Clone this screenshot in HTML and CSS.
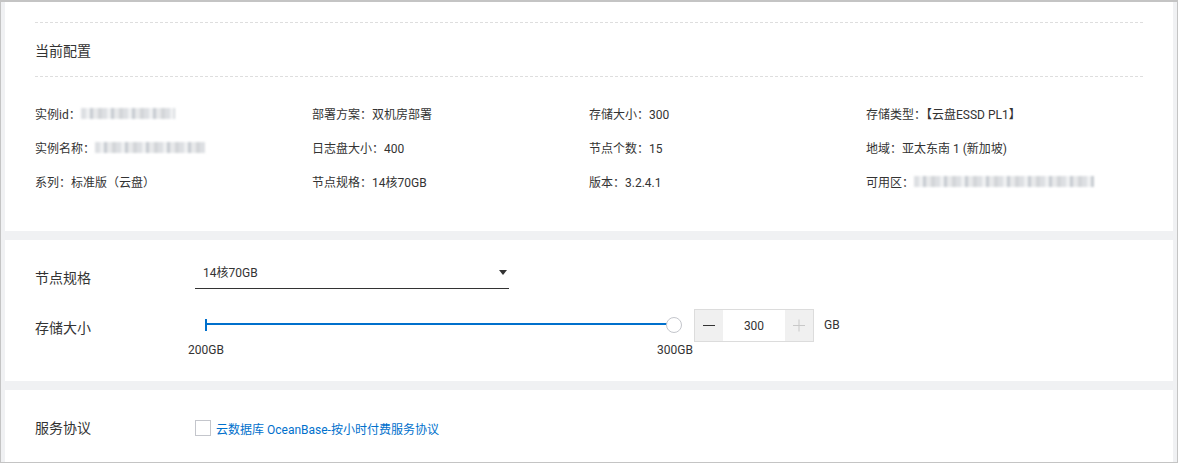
FILE: index.html
```html
<!DOCTYPE html>
<html lang="zh-CN">
<head>
    <meta charset="UTF-8">
    <title>OceanBase 变更配置</title>
    <link rel="stylesheet" href="styles.css">
</head>
<body>
    <div class="frame">
        <div class="card card-config">
            <div class="section-title">当前配置</div>
            <div class="config-grid">
                <div class="cell">实例id：<span class="blur" style="width:94px"></span></div>
                <div class="cell">部署方案：双机房部署</div>
                <div class="cell">存储大小：300</div>
                <div class="cell">存储类型：【云盘ESSD PL1】</div>

                <div class="cell">实例名称：<span class="blur" style="width:110px"></span></div>
                <div class="cell">日志盘大小：400</div>
                <div class="cell">节点个数：15</div>
                <div class="cell">地域：亚太东南 1 (新加坡)</div>

                <div class="cell">系列：标准版（云盘）</div>
                <div class="cell">节点规格：14核70GB</div>
                <div class="cell">版本：3.2.4.1</div>
                <div class="cell">可用区：<span class="blur" style="width:180px"></span></div>
            </div>
        </div>

        <div class="card card-form">
            <div class="form-row row-spec">
                <div class="form-label">节点规格</div>
                <div class="select">
                    <span>14核70GB</span>
                    <span class="caret"></span>
                </div>
            </div>
            <div class="form-row row-storage">
                <div class="form-label">存储大小</div>
                <div class="slider">
                    <div class="slider-area">
                        <div class="track">
                            <span class="tick"></span>
                            <span class="handle"></span>
                        </div>
                    </div>
                    <div class="marks">
                        <span>200GB</span>
                        <span>300GB</span>
                    </div>
                </div>
                <div class="number-input">
                    <button class="step minus" type="button"></button>
                    <input type="text" value="300">
                    <button class="step plus" type="button"></button>
                </div>
                <div class="unit">GB</div>
            </div>
        </div>

        <div class="card card-agree">
            <div class="form-row">
                <div class="form-label">服务协议</div>
                <label class="agree">
                    <span class="checkbox"></span>
                    <a href="#">云数据库 OceanBase-按小时付费服务协议</a>
                </label>
            </div>
        </div>
    </div>
</body>
</html>
```

FILE: styles.css
```css
* {
    box-sizing: border-box;
}
body {
    margin: 0;
    font-family: Roboto, "Noto Sans CJK SC", sans-serif;
    color: #333;
    font-size: 12px;
}
.frame {
    height: 463px;
    border: 1px solid #c4c4c4;
    border-top-width: 2px;
    background: #f0f1f3;
    padding: 0 4px;
    display: flex;
    flex-direction: column;
    gap: 9px;
    overflow: hidden;
}
.card {
    background: #fff;
    padding: 0 30px;
}
.card-config {
    height: 229px;
    padding-top: 20px;
}
.section-title {
    border-top: 1px dashed #dedede;
    border-bottom: 1px dashed #dedede;
    font-size: 14px;
    line-height: 20px;
    padding: 18px 0 15px;
}
.config-grid {
    display: grid;
    grid-template-columns: repeat(4, 1fr);
    grid-auto-rows: 34px;
    margin-top: 19px;
}
.cell {
    display: flex;
    align-items: center;
    white-space: nowrap;
}
.blur {
    display: inline-block;
    height: 11px;
    background: repeating-linear-gradient(90deg, #d5d8dc 0 5px, #eceef0 5px 9px, #b9bfc6 9px 12px, #e2e4e6 12px 17px, #c9ccd0 17px 21px);
    filter: blur(1.2px);
    opacity: 0.8;
}

.card-form {
    height: 141px;
    padding-top: 16px;
}
.form-row {
    display: flex;
    align-items: flex-start;
}
.form-label {
    width: 160px;
    flex-shrink: 0;
    font-size: 14px;
    line-height: 20px;
}
.row-spec .form-label {
    padding-top: 12px;
}
.select {
    width: 314px;
    height: 33px;
    border-bottom: 1px solid #333;
    padding: 7px 2px 0 8px;
    line-height: 20px;
    display: flex;
    justify-content: space-between;
}
.caret {
    margin-top: 7px;
    border-left: 4px solid transparent;
    border-right: 4px solid transparent;
    border-top: 5px solid #333;
    height: 0;
}
.row-storage {
    margin-top: 20px;
}
.row-storage .form-label {
    padding-top: 9px;
}
.slider {
    width: 499px;
    padding: 0 20px 0 11px;
}
.slider-area {
    height: 33px;
    padding-top: 14px;
}
.track {
    position: relative;
    height: 2px;
    background: #0070cc;
}
.tick {
    position: absolute;
    left: -1px;
    top: -4px;
    width: 2px;
    height: 12px;
    background: #0070cc;
}
.handle {
    position: absolute;
    right: -8px;
    top: -6px;
    width: 16px;
    height: 16px;
    border-radius: 50%;
    background: #fff;
    border: 1px solid #c4c6cc;
}
.marks {
    display: flex;
    justify-content: space-between;
    margin: 0 -19px 0 -18px;
    line-height: 16px;
}
.number-input {
    display: flex;
    width: 120px;
    height: 33px;
    border: 1px solid #dcdcdc;
}
.number-input input {
    width: 62px;
    border: none;
    text-align: center;
    font: inherit;
    color: #333;
    padding: 0;
    outline: none;
}
.step {
    position: relative;
    width: 28px;
    border: none;
    padding: 0;
    background: #f0f0f0;
}
.step::before,
.step::after {
    content: "";
    position: absolute;
    left: 8px;
    top: 15px;
    width: 12px;
    height: 1px;
    background: #333;
}
.minus::after {
    display: none;
}
.plus::before,
.plus::after {
    background: #c8c8c8;
}
.plus::after {
    transform: rotate(90deg);
}
.unit {
    margin-left: 10px;
    line-height: 33px;
}

.card-agree {
    flex: 1;
    padding-top: 28px;
}
.agree {
    display: flex;
    align-items: center;
    height: 20px;
}
.checkbox {
    width: 16px;
    height: 16px;
    border: 1px solid #c4c6cc;
    margin-right: 5px;
}
.agree a {
    color: #0070cc;
    text-decoration: none;
}
```
